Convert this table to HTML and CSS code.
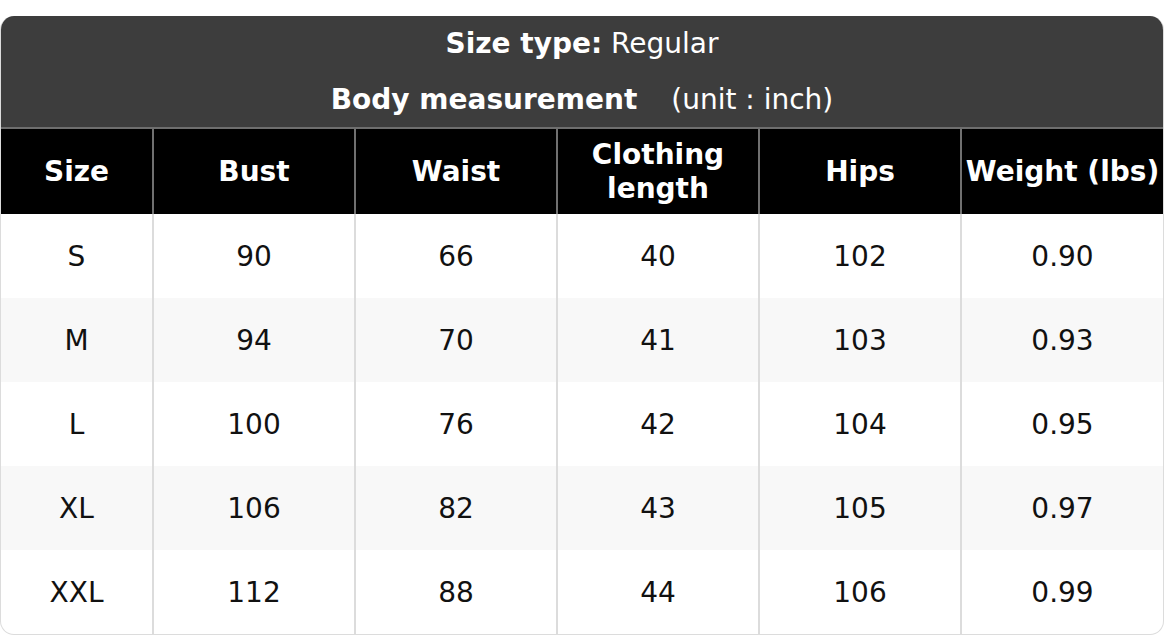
FILE: index.html
```html
<!DOCTYPE html>
<html>
<head>
<meta charset="utf-8">
<link rel="stylesheet" href="styles.css">
</head>
<body>
<div class="card">
  <div class="title">
    <div class="line"><b>Size type:</b> Regular</div>
    <div class="line"><b>Body measurement</b><span class="unit">(unit : inch)</span></div>
  </div>
  <table class="chart">
    <colgroup>
      <col class="c-first"><col class="c-mid"><col class="c-mid"><col><col><col>
    </colgroup>
    <thead>
      <tr><th>Size</th><th>Bust</th><th>Waist</th><th>Clothing<br>length</th><th>Hips</th><th>Weight (lbs)</th></tr>
    </thead>
    <tbody>
      <tr><td>S</td><td>90</td><td>66</td><td>40</td><td>102</td><td>0.90</td></tr>
      <tr><td>M</td><td>94</td><td>70</td><td>41</td><td>103</td><td>0.93</td></tr>
      <tr><td>L</td><td>100</td><td>76</td><td>42</td><td>104</td><td>0.95</td></tr>
      <tr><td>XL</td><td>106</td><td>82</td><td>43</td><td>105</td><td>0.97</td></tr>
      <tr><td>XXL</td><td>112</td><td>88</td><td>44</td><td>106</td><td>0.99</td></tr>
    </tbody>
  </table>
</div>
</body>
</html>
```
FILE: styles.css
```css
html, body {
  margin: 0;
  padding: 0;
  background: #fff;
}
body {
  padding-top: 16px;
  font-family: "DejaVu Sans", sans-serif;
}
.card {
  border: 1px solid #dcdcdc;
  border-top: none;
  border-radius: 14px;
  overflow: hidden;
  height: 619px;
  box-sizing: border-box;
}
.title {
  background: #3d3d3d;
  color: #fff;
  text-align: center;
  font-size: 28px;
  border-bottom: 2px solid #6e6e6e;
}
.line {
  height: 56px;
  line-height: 56px;
}
.line:last-child {
  height: 55px;
  line-height: 56px;
}
.unit {
  margin-left: 34px;
}
.chart {
  width: 100%;
  border-collapse: collapse;
  table-layout: fixed;
  font-size: 28px;
}
.c-first {
  width: 152px;
}
.c-mid {
  width: 202px;
}
.chart th {
  background: #000;
  color: #fff;
  font-weight: bold;
  height: 85px;
  padding: 0;
  line-height: 34px;
  border-left: 2px solid #707070;
  text-align: center;
}
.chart th:first-child,
.chart td:first-child {
  border-left: none;
}
.chart td {
  height: 84px;
  padding: 0;
  text-align: center;
  color: #111;
  border-left: 2px solid #dcdcdc;
}
.chart tbody tr:nth-child(even) td {
  background: #f8f8f8;
}
```
